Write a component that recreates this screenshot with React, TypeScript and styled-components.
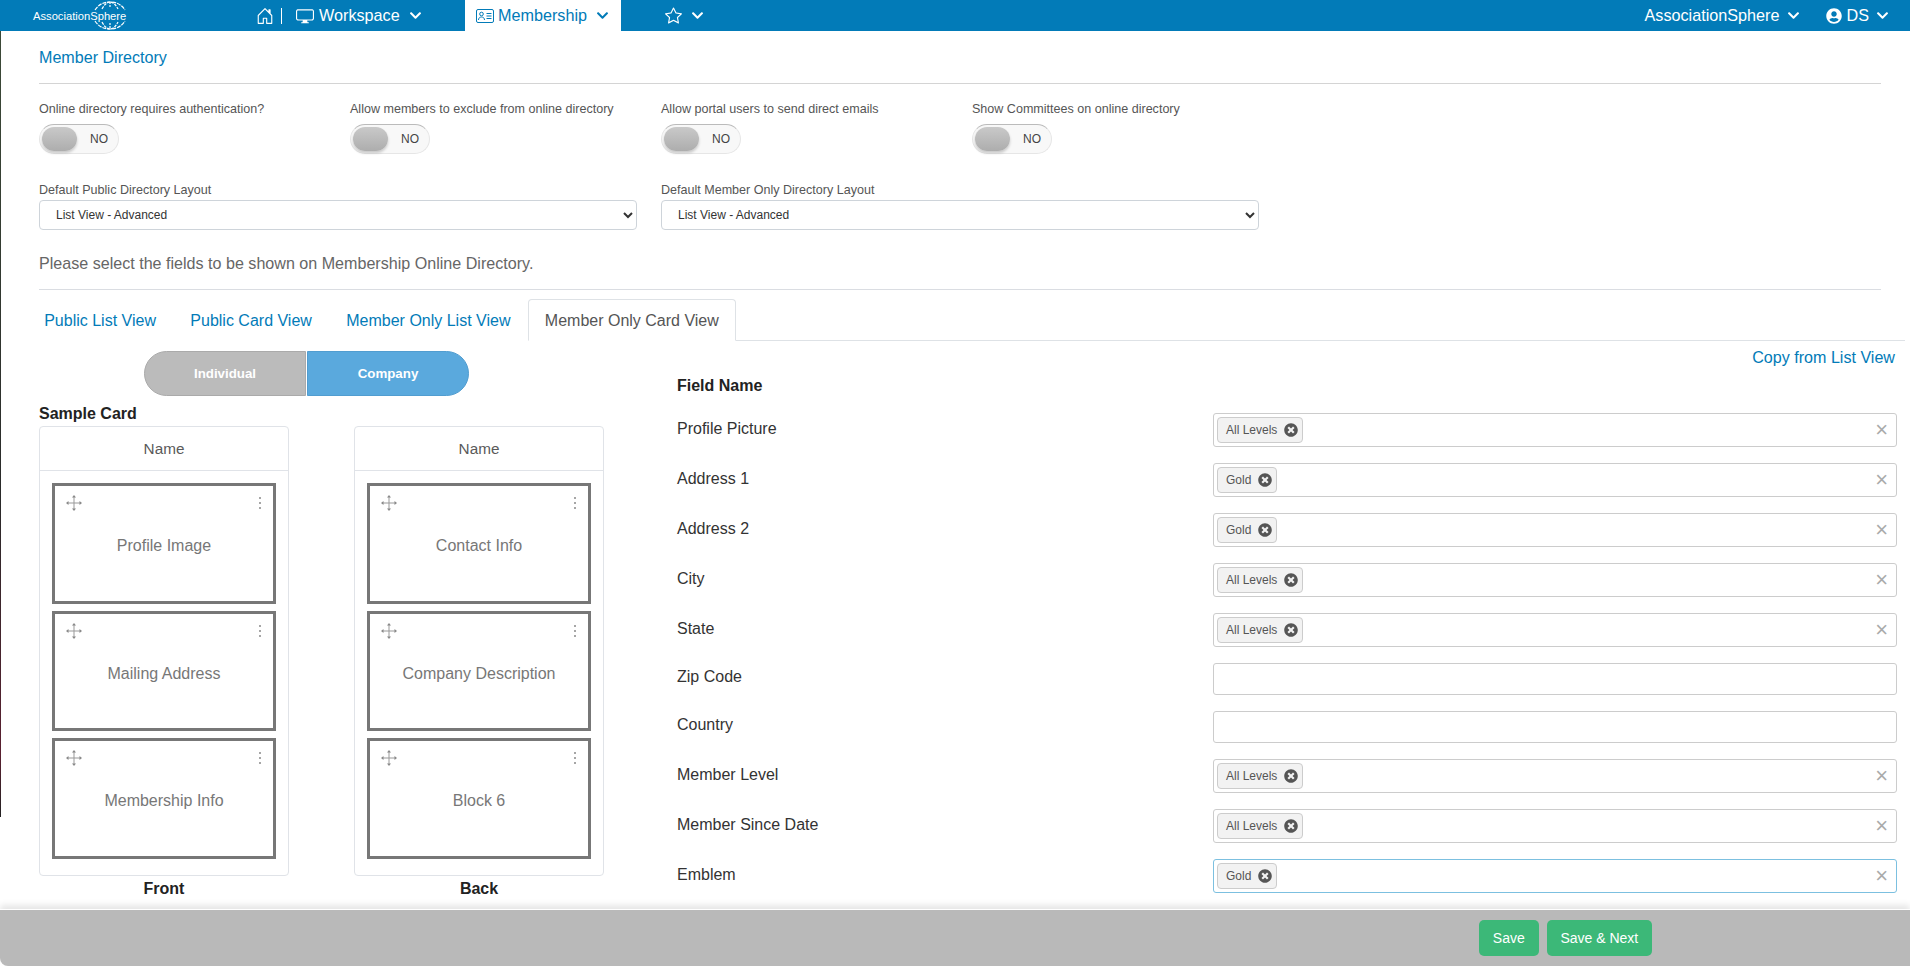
import React from 'react';
import styled, { createGlobalStyle } from 'styled-components';
import { BsHouseDoor, BsDisplay, BsStar } from 'react-icons/bs';
import { FaChevronDown, FaUserCircle, FaTimesCircle } from 'react-icons/fa';

const Global = createGlobalStyle`
  html, body { margin: 0; padding: 0; height: 100%; overflow: hidden; background: #fff; }
  * { box-sizing: border-box; }
  body { font-family: "Liberation Sans", Arial, sans-serif; color: #555; }
`;
const Page = styled.div`
  position: relative; height: 966px; display: flex; flex-direction: column; overflow: hidden;
  &::before { content: ""; position: absolute; left: 0; top: 31px; width: 1px; height: 786px;
    background: linear-gradient(#3c4a38, #2a2a2a 60%, #5a2030 92%, #222); }
`;
const Header = styled.header`
  height: 31px; flex: none; background: #027bb8; display: flex; align-items: stretch; color: #fff; font-size: 16.2px;
`;
const LogoBox = styled.div`
  width: 256px; flex: none; padding-left: 33px; display: flex; align-items: center; position: relative; font-size: 11.2px;
`;
const Globe = styled.svg`
  position: absolute; left: 92px; top: 1px; width: 36px; height: 29px;
`;
const NavGroup = styled.div`
  display: flex; align-items: center;
`;
const HomeGroup = styled(NavGroup)`
  width: 209px; flex: none;
`;
const Sep = styled.span`
  width: 1px; height: 16px; background: #fff; margin: 0 14px 0 7px;
`;
const NavText = styled.span`
  margin-left: 5px;
`;
const TabText = styled.span`
  margin-left: 4px;
`;
const Chev = styled(FaChevronDown)`
  font-size: 13px; margin-left: 9px;
`;
const RightChev = styled(Chev)`
  margin-left: 7px;
`;
const ActiveTab = styled.div`
  width: 156px; flex: none; background: #fff; color: #027bb8; display: flex; align-items: center; padding-left: 11px;
`;
const StarGroup = styled(NavGroup)`
  margin-left: 44px;
`;
const Spacer = styled.div`
  flex: 1;
`;
const RightNav = styled(NavGroup)`
  padding-right: 21px;
`;
const UserIcon = styled(FaUserCircle)`
  font-size: 16px; margin-left: 26px;
`;
const Content = styled.main`
  flex: 1; min-height: 0; overflow: hidden; display: flex; flex-direction: column;
`;
const Top = styled.section`
  padding: 17px 29px 0 39px;
`;
const Title = styled.div`
  color: #027bb8; font-size: 16.1px; line-height: 18px;
`;
const Rule = styled.hr`
  border: 0; border-top: 1px solid #d4d4d4; margin: 17px 0 0;
`;
const Settings = styled.div`
  display: flex; margin-top: 17px;
`;
const Setting = styled.div`
  width: 311px;
`;
const Label = styled.div`
  font-size: 12.55px; line-height: 16px; color: #555;
`;
const Toggle = styled.div`
  margin-top: 7px; width: 80px; height: 30px; border-radius: 15px; border: 1px solid #e6e6e6; border-top-color: #bbb; background: #f8f8f8;
  position: relative; font-size: 12px; color: #444; display: flex; align-items: center; justify-content: flex-end; padding-right: 10px;
`;
const Knob = styled.span`
  position: absolute; left: 2px; top: 2px; width: 35px; height: 24px; border-radius: 12px;
  background: linear-gradient(#c9c9c9, #adadad); box-shadow: 0 2px 3px rgba(0,0,0,.2);
`;
const Selects = styled.div`
  display: flex; gap: 24px; margin-top: 28px;
`;
const SelectField = styled.div`
  width: 598px;
`;
const Select = styled.select`
  display: block; width: 100%; height: 30px; margin-top: 2px; padding: 0 12px; font: 12px "Liberation Sans", Arial, sans-serif; color: #333;
  background: #fff; border: 1px solid #ced4da; border-radius: 4px;
`;
const Hint = styled.div`
  margin-top: 23px; font-size: 16.1px; line-height: 20px; color: #666;
`;
const HintRule = styled(Rule)`
  border-top-color: #dadde2; margin-top: 16px;
`;
const Tabs = styled.nav`
  margin: 9px 5px 0 27px; height: 42px; flex: none; display: flex; border-bottom: 1px solid #dee2e6;
`;
const Tab = styled.div<{ $active?: boolean }>`
  padding: 0 16.2px; height: 42px; font-size: 16px; line-height: 41px; color: ${p => (p.$active ? '#555' : '#027bb8')};
  border: 1px solid ${p => (p.$active ? '#dee2e6' : 'transparent')}; border-bottom-color: ${p => (p.$active ? '#fff' : 'transparent')};
  border-radius: 4px 4px 0 0; background: #fff;
`;
const Body = styled.div`
  display: flex; flex: 1; min-height: 0;
`;
const LeftCol = styled.div`
  width: 677px; flex: none; padding-left: 39px;
`;
const Switch = styled.div`
  display: flex; gap: 1px; margin: 10px 0 0 105px;
`;
const SwitchBtn = styled.div<{ $on?: boolean; $side: 'l' | 'r' }>`
  width: 162px; height: 45px; display: flex; align-items: center; justify-content: center; color: #fff; font-size: 13.3px; font-weight: 700;
  background: ${p => (p.$on ? '#5aa9dd' : '#bbb')}; border: 1px solid ${p => (p.$on ? '#519dd0' : '#aaa')};
  border-radius: ${p => (p.$side === 'l' ? '23px 0 0 23px' : '0 23px 23px 0')};
`;
const SampleTitle = styled.div`
  font-size: 16px; font-weight: 700; line-height: 18px; color: #222; margin-top: 9px;
`;
const Cards = styled.div`
  display: flex; gap: 65px; margin-top: 3px;
`;
const CardCol = styled.div`
  width: 250px;
`;
const Card = styled.div`
  border: 1px solid #e0e3e8; border-radius: 4px; height: 450px;
`;
const CardHead = styled.div`
  height: 44px; border-bottom: 1px solid #e0e3e8; display: flex; align-items: center; justify-content: center; font-size: 15.3px; color: #5a5a5a;
`;
const CardBody = styled.div`
  padding: 12px 12px 0; display: flex; flex-direction: column; gap: 7px;
`;
const Block = styled.div`
  height: 120.6px; border: 3px solid #777; padding: 9px 11px; display: flex; flex-direction: column;
`;
const BlockTop = styled.div`
  display: flex; justify-content: space-between; align-items: center; height: 16px;
`;
const BlockLabel = styled.div`
  margin-top: 26px; text-align: center; font-size: 16px; line-height: 18px; color: #777;
`;
const CardCaption = styled.div`
  text-align: center; font-size: 16px; font-weight: 700; line-height: 18px; color: #222; margin-top: 4px;
`;
const RightCol = styled.div`
  flex: 1; min-width: 0; padding-right: 13px;
`;
const CopyLink = styled.div`
  text-align: right; color: #027bb8; font-size: 16.1px; line-height: 18px; margin: 7px 2px 0 0;
`;
const FieldHead = styled.div`
  font-size: 16px; font-weight: 700; line-height: 18px; color: #222; margin-top: 11px;
`;
const Rows = styled.div`
  margin-top: 18px; display: flex; flex-direction: column; gap: 16px;
`;
const Row = styled.div`
  display: flex; justify-content: space-between;
`;
const RowLabel = styled.div<{ $empty?: boolean }>`
  font-size: 16px; line-height: 18px; color: #333; margin-top: ${p => (p.$empty ? 5 : 7)}px;
`;
const TagInput = styled.div<{ $focus?: boolean; $empty?: boolean }>`
  width: 684px; height: ${p => (p.$empty ? 32 : 34)}px; border: 1px solid ${p => (p.$focus ? '#7cc0e0' : '#ccc')}; border-radius: 3px; background: #fff;
  display: flex; align-items: center; justify-content: space-between; padding: 0 8px 0 3px;
`;
const Tag = styled.div`
  height: 26px; display: flex; align-items: center; gap: 7px; padding: 0 4px 0 8px; background: #f2f2f2; border: 1px solid #ccc; border-radius: 4px; font-size: 12px; color: #555;
`;
const TagX = styled(FaTimesCircle)`
  font-size: 14px; color: #555;
`;
const Clear = styled.span`
  color: #aaa; font-size: 22px; line-height: 20px;
`;
const Footer = styled.footer`
  height: 57px; flex: none; background: #b9b9b9; border-top: 1px solid #fff; border-bottom-left-radius: 8px; box-shadow: 0 -4px 6px rgba(0,0,0,.1);
  display: flex; justify-content: flex-end; align-items: flex-start; gap: 8px; padding: 10px 258px 0 0; position: relative;
`;
const Btn = styled.div`
  height: 36px; padding: 0 13.8px; background: #3cb878; color: #fff; font-size: 14px; border-radius: 5px; display: flex; align-items: center;
`;

const Logo = () => (
  <Globe viewBox="0 0 36 29" fill="none" stroke="#fff" strokeWidth="1.2">
    <path d="M3 9C7 3 12 1 18 1s11 2 15 8" strokeDasharray="4 1" />
    <path d="M10 8c2-4 5-7 8-7s6 3 8 7" strokeDasharray="3 1" />
    <path d="M18 1v6" strokeDasharray="2 1" />
    <path d="M3 20c4 6 9 8 15 8s11-2 15-8" strokeDasharray="4 1" />
    <path d="M10 21c2 4 5 7 8 7s6-3 8-7" strokeDasharray="3 1" />
    <path d="M18 22v6" strokeDasharray="2 1" />
  </Globe>
);
const CardIcon = () => (
  <svg width="18" height="14" viewBox="0 0 18 14" fill="none" stroke="currentColor" strokeWidth="1">
    <rect x="0.5" y="0.5" width="17" height="13" rx="1.5" />
    <circle cx="5.5" cy="5" r="1.8" />
    <path d="M2.5 11c0-2 1.3-3 3-3s3 1 3 3" />
    <path d="M10.5 4.5h5M10.5 7h5M10.5 9.5h5" />
  </svg>
);
const MoveIcon = () => (
  <svg width="16" height="16" viewBox="0 0 16 16">
    <path d="M8 2v12M2 8h12" stroke="#999" strokeWidth="1" fill="none" />
    <path d="M8 0l2 2.5H6zM8 16l-2-2.5h4zM0 8l2.5-2v4zM16 8l-2.5 2V6z" fill="#888" />
  </svg>
);
const DotsIcon = () => (
  <svg width="4" height="14" viewBox="0 0 4 14" fill="#888">
    <circle cx="2" cy="2" r="1" /><circle cx="2" cy="7" r="1" /><circle cx="2" cy="12" r="1" />
  </svg>
);

const settings = ['Online directory requires authentication?', 'Allow members to exclude from online directory', 'Allow portal users to send direct emails', 'Show Committees on online directory'];
const fields: { n: string; t?: string; f?: boolean }[] = [
  { n: 'Profile Picture', t: 'All Levels' }, { n: 'Address 1', t: 'Gold' }, { n: 'Address 2', t: 'Gold' },
  { n: 'City', t: 'All Levels' }, { n: 'State', t: 'All Levels' }, { n: 'Zip Code' }, { n: 'Country' },
  { n: 'Member Level', t: 'All Levels' }, { n: 'Member Since Date', t: 'All Levels' }, { n: 'Emblem', t: 'Gold', f: true },
];
const cards = [
  { cap: 'Front', blocks: ['Profile Image', 'Mailing Address', 'Membership Info'] },
  { cap: 'Back', blocks: ['Contact Info', 'Company Description', 'Block 6'] },
];

export default function App() {
  return (
    <Page>
      <Global />
      <Header>
        <LogoBox>AssociationSphere<Logo /></LogoBox>
        <HomeGroup>
          <BsHouseDoor size={18} /><Sep />
          <BsDisplay size={18} /><NavText>Workspace</NavText><Chev />
        </HomeGroup>
        <ActiveTab>
          <CardIcon /><TabText>Membership</TabText><Chev />
        </ActiveTab>
        <StarGroup><BsStar size={17} /><Chev /></StarGroup>
        <Spacer />
        <RightNav>
          AssociationSphere<RightChev />
          <UserIcon /><NavText>DS</NavText><RightChev />
        </RightNav>
      </Header>
      <Content>
        <Top>
          <Title>Member Directory</Title>
          <Rule />
          <Settings>
            {settings.map(s => (
              <Setting key={s}>
                <Label>{s}</Label>
                <Toggle><Knob />NO</Toggle>
              </Setting>
            ))}
          </Settings>
          <Selects>
            <SelectField>
              <Label>Default Public Directory Layout</Label>
              <Select defaultValue="a"><option value="a">List View - Advanced</option></Select>
            </SelectField>
            <SelectField>
              <Label>Default Member Only Directory Layout</Label>
              <Select defaultValue="a"><option value="a">List View - Advanced</option></Select>
            </SelectField>
          </Selects>
          <Hint>Please select the fields to be shown on Membership Online Directory.</Hint>
          <HintRule />
        </Top>
        <Tabs>
          <Tab>Public List View</Tab>
          <Tab>Public Card View</Tab>
          <Tab>Member Only List View</Tab>
          <Tab $active>Member Only Card View</Tab>
        </Tabs>
        <Body>
          <LeftCol>
            <Switch>
              <SwitchBtn $side="l">Individual</SwitchBtn>
              <SwitchBtn $side="r" $on>Company</SwitchBtn>
            </Switch>
            <SampleTitle>Sample Card</SampleTitle>
            <Cards>
              {cards.map(c => (
                <CardCol key={c.cap}>
                  <Card>
                    <CardHead>Name</CardHead>
                    <CardBody>
                      {c.blocks.map(b => (
                        <Block key={b}>
                          <BlockTop><MoveIcon /><DotsIcon /></BlockTop>
                          <BlockLabel>{b}</BlockLabel>
                        </Block>
                      ))}
                    </CardBody>
                  </Card>
                  <CardCaption>{c.cap}</CardCaption>
                </CardCol>
              ))}
            </Cards>
          </LeftCol>
          <RightCol>
            <CopyLink>Copy from List View</CopyLink>
            <FieldHead>Field Name</FieldHead>
            <Rows>
              {fields.map(f => (
                <Row key={f.n}>
                  <RowLabel $empty={!f.t}>{f.n}</RowLabel>
                  <TagInput $focus={f.f} $empty={!f.t}>
                    {f.t && <Tag>{f.t}<TagX /></Tag>}
                    {f.t && <Clear>×</Clear>}
                  </TagInput>
                </Row>
              ))}
            </Rows>
          </RightCol>
        </Body>
      </Content>
      <Footer>
        <Btn>Save</Btn>
        <Btn>Save &amp; Next</Btn>
      </Footer>
    </Page>
  );
}
